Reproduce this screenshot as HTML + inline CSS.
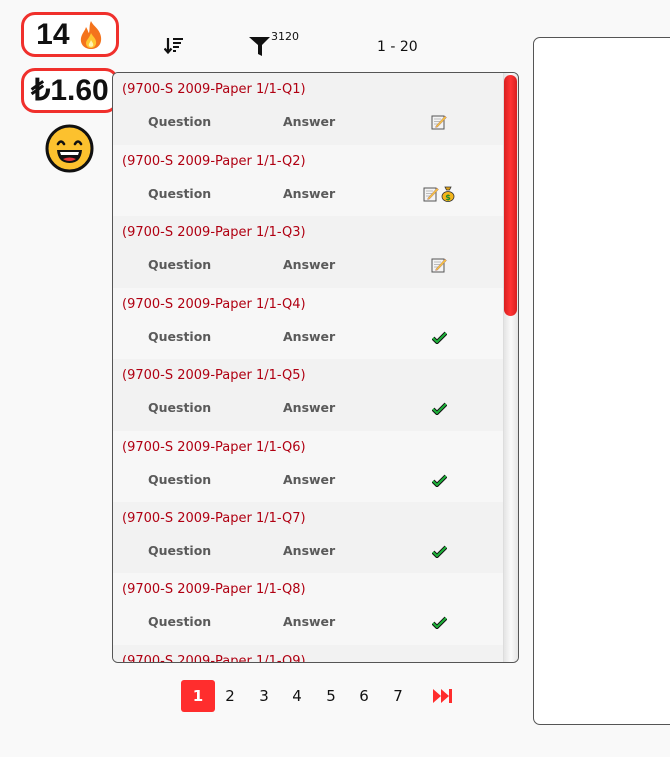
<!DOCTYPE html>
<html><head><meta charset="utf-8"><style>
*{margin:0;padding:0;box-sizing:border-box}
body{width:670px;height:757px;background:#f9f9f9;font-family:"DejaVu Sans","Liberation Sans",sans-serif;position:relative;overflow:hidden}
.badge{position:absolute;left:21px;width:98px;height:45px;border:3px solid #f0302c;border-radius:14px;background:#fff;font-family:"Liberation Sans",sans-serif;font-weight:bold;font-size:30px;color:#111;display:flex;align-items:center;justify-content:center}
.box{position:absolute;left:112px;top:72px;width:407px;height:591px;border:1px solid #555;border-radius:6px;overflow:hidden;background:#f7f7f7}
.row{position:absolute;left:0;width:392px;height:72px}
.a{background:#f2f2f2}.b{background:#f7f7f7}
.t{position:absolute;left:9px;top:9px;font-size:13px;color:#b00012}
.q{position:absolute;top:41px;font-size:12.5px;font-weight:bold;color:#5a5a5a}
.q1{left:35px}.q2{left:170px}
.ic{position:absolute;top:41px}
.sb{position:absolute;right:0;top:0;width:15px;height:100%;background:linear-gradient(90deg,#e4e4e4,#fafafa,#e4e4e4);border-left:1px solid #ddd}
.thumb{position:absolute;right:1px;top:2px;width:13px;height:241px;background:linear-gradient(90deg,#d81f1f,#ff3333,#d81f1f);border-radius:7px}
.pg{position:absolute;top:680px;width:34px;height:32px;font-size:15px;color:#111;display:flex;align-items:center;justify-content:center}
</style></head><body>
<svg width="0" height="0" style="position:absolute"><defs>
<symbol id="note" viewBox="0 0 16 16"><rect x="1" y="2" width="12" height="13" fill="#f4f4f4" stroke="#555"/><path d="M3 5H10M3 7.5H10M3 10H8" stroke="#bbb"/><path d="M5 12L14 2L15.5 3.5L6.5 13L4.5 13.5Z" fill="#f5c242" stroke="#a77" stroke-width=".5"/></symbol>
<symbol id="chk" viewBox="0 0 15 13"><path d="M1 7L5 11L14 2" stroke="#111" stroke-width="4" fill="none"/><path d="M1 7L5 11L14 2" stroke="#1db33a" stroke-width="2" fill="none"/></symbol>
</defs></svg>
<div class="badge" style="top:12px">14&nbsp;<svg width="26" height="30" viewBox="0 0 26 30"><path d="M13 1C15 6 22 9 23 17C24 25 19 29 13 29C7 29 2 25 3 18C4 13 7 11 8 7C10 10 10 12 11 13C12 9 11 5 13 1Z" fill="#f4731c"/><path d="M13 13C15 17 19 19 18 24C17 27 15 28 13 28C10 28 8 26 8 23C8 20 11 19 13 13Z" fill="#ffc630"/><path d="M13 20C14 22 16 24 15 26C14 27 12 27 11 26C10 24 12 23 13 20Z" fill="#fff3b0"/></svg></div>
<div class="badge" style="top:68px">₺1.60</div>
<svg style="position:absolute;left:45px;top:124px" width="49" height="49" viewBox="0 0 49 49"><circle cx="24.5" cy="24.5" r="22.5" fill="#fcc12e" stroke="#111" stroke-width="3"/><path d="M13 20Q16 15 19 20M30 20Q33 15 36 20" stroke="#111" stroke-width="2.6" fill="none" stroke-linecap="round"/><path d="M12 26H37Q36 39 24.5 39Q13 39 12 26Z" fill="#111"/><path d="M15 28H34Q33 31 33 31H16Z" fill="#fff"/><path d="M18 35Q24.5 32 31 35Q28 37 24.5 37Q21 37 18 35Z" fill="#e3353b"/></svg>
<svg style="position:absolute;left:164px;top:37px" width="20" height="18" viewBox="0 0 20 18"><path d="M4 1V15M0.5 11.5L4 15.5L7.5 11.5" stroke="#111" stroke-width="2.2" fill="none"/><path d="M9 2H19M9 6H17M9 10H15M9 14H12" stroke="#111" stroke-width="2"/></svg>
<svg style="position:absolute;left:249px;top:36px" width="22" height="20" viewBox="0 0 22 20"><path d="M0 1H21L13 9V20L9 18V9Z" fill="#111"/></svg>
<div style="position:absolute;left:271px;top:30px;font-size:11px;color:#111">3120</div>
<div style="position:absolute;left:377px;top:39px;font-size:14px;color:#111">1 - 20</div>
<div class="box">
<div class="row a" style="top:0"><span class="t">(9700-S 2009-Paper 1/1-Q1)</span><span class="q q1">Question</span><span class="q q2">Answer</span><svg class="ic" style="left:318px" width="16" height="16"><use href="#note"/></svg></div>
<div class="row b" style="top:72px"><span class="t">(9700-S 2009-Paper 1/1-Q2)</span><span class="q q1">Question</span><span class="q q2">Answer</span><svg class="ic" style="left:310px" width="16" height="16"><use href="#note"/></svg><svg class="ic" style="left:328px" width="14" height="16" viewBox="0 0 14 16"><path d="M4 1H10L8.5 4H5.5Z" fill="#e3a418" stroke="#333" stroke-width=".8"/><ellipse cx="7" cy="10.5" rx="6" ry="5" fill="#f3b51b" stroke="#333" stroke-width=".8"/><text x="7" y="14" font-size="8" text-anchor="middle" fill="#178a2b" font-weight="bold" font-family="DejaVu Sans">$</text></svg></div>
<div class="row a" style="top:143px"><span class="t">(9700-S 2009-Paper 1/1-Q3)</span><span class="q q1">Question</span><span class="q q2">Answer</span><svg class="ic" style="left:318px" width="16" height="16"><use href="#note"/></svg></div>
<div class="row b" style="top:215px"><span class="t">(9700-S 2009-Paper 1/1-Q4)</span><span class="q q1">Question</span><span class="q q2">Answer</span><svg class="ic" style="left:319px;top:43px" width="15" height="13"><use href="#chk"/></svg></div>
<div class="row a" style="top:286px"><span class="t">(9700-S 2009-Paper 1/1-Q5)</span><span class="q q1">Question</span><span class="q q2">Answer</span><svg class="ic" style="left:319px;top:43px" width="15" height="13"><use href="#chk"/></svg></div>
<div class="row b" style="top:358px"><span class="t">(9700-S 2009-Paper 1/1-Q6)</span><span class="q q1">Question</span><span class="q q2">Answer</span><svg class="ic" style="left:319px;top:43px" width="15" height="13"><use href="#chk"/></svg></div>
<div class="row a" style="top:429px"><span class="t">(9700-S 2009-Paper 1/1-Q7)</span><span class="q q1">Question</span><span class="q q2">Answer</span><svg class="ic" style="left:319px;top:43px" width="15" height="13"><use href="#chk"/></svg></div>
<div class="row b" style="top:500px"><span class="t">(9700-S 2009-Paper 1/1-Q8)</span><span class="q q1">Question</span><span class="q q2">Answer</span><svg class="ic" style="left:319px;top:43px" width="15" height="13"><use href="#chk"/></svg></div>
<div class="row a" style="top:572px"><span class="t">(9700-S 2009-Paper 1/1-Q9)</span></div>
<div class="sb"><div class="thumb"></div></div>
</div>
<div style="position:absolute;left:533px;top:37px;width:150px;height:688px;background:#fff;border:1px solid #555;border-radius:7px"></div>
<div class="pg" style="left:181px;background:#ff2d2d;color:#fff;border-radius:3px;font-weight:bold">1</div>
<div class="pg" style="left:213px">2</div><div class="pg" style="left:247px">3</div><div class="pg" style="left:280px">4</div><div class="pg" style="left:314px">5</div><div class="pg" style="left:347px">6</div><div class="pg" style="left:381px">7</div>
<svg style="position:absolute;left:433px;top:689px" width="19" height="14" viewBox="0 0 19 14"><path d="M0 0L8 7L0 14ZM8 0L16 7L8 14Z" fill="#ff2d2d"/><rect x="16" y="0" width="3" height="14" fill="#ff2d2d"/></svg>
</body></html>
